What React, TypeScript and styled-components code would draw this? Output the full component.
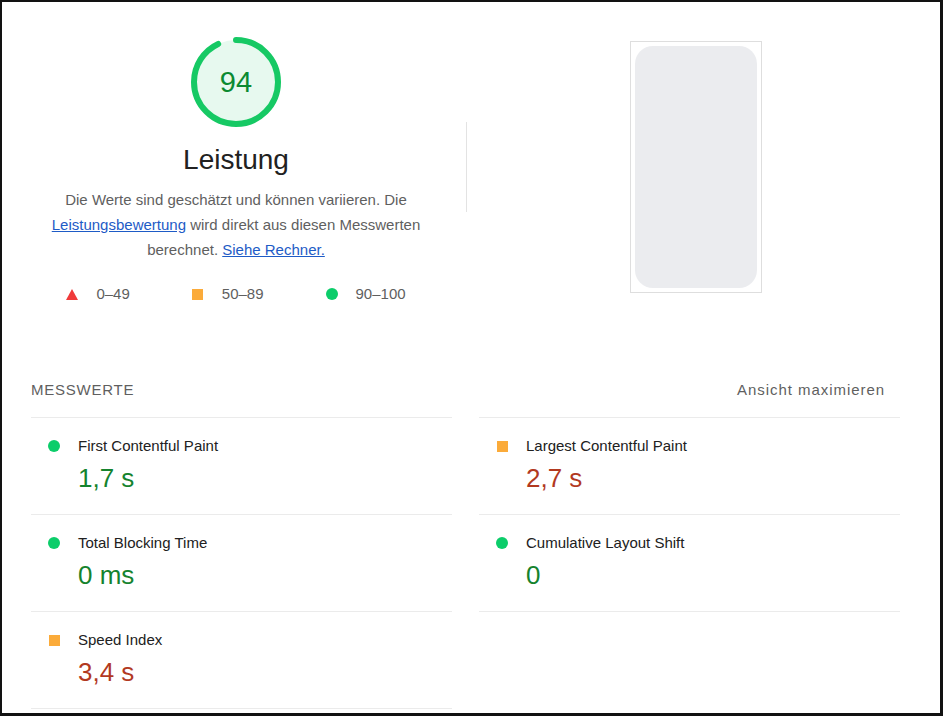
import styled, { createGlobalStyle } from 'styled-components';

const GlobalStyle = createGlobalStyle`
  html, body {
    margin: 0;
    padding: 0;
    background: #fff;
  }
  body {
    font-family: "Liberation Sans", Arial, sans-serif;
    color: #212121;
  }
`;

const Frame = styled.div`
  box-sizing: border-box;
  width: 943px;
  height: 716px;
  overflow: hidden;
  background: #fff;
  border-style: solid;
  border-color: #121212;
  border-width: 2px 3px 3px 2px;
  padding: 35px 40px 0 29px;
`;

const Summary = styled.section`
  display: flex;
  align-items: flex-start;
`;

const ScoreColumn = styled.div`
  width: 410px;
  display: flex;
  flex-direction: column;
  align-items: center;
`;

const GaugeWrap = styled.div`
  position: relative;
  width: 90px;
  height: 90px;

  svg {
    display: block;
    width: 90px;
    height: 90px;
  }
`;

const GaugeValue = styled.div`
  position: absolute;
  inset: 0;
  display: flex;
  align-items: center;
  justify-content: center;
  font-size: 29px;
  color: #0b8a31;
`;

const Title = styled.h2`
  margin: 16px 0 0;
  font-size: 28px;
  line-height: 34px;
  font-weight: 400;
  color: #212121;
`;

const Description = styled.p`
  margin: 10px 0 0;
  width: 390px;
  text-align: center;
  font-size: 15px;
  line-height: 25px;
  color: #5f5f5f;

  a {
    color: #1e5bc6;
    text-decoration: underline;
  }
`;

const Legend = styled.div`
  display: flex;
  gap: 62px;
  margin-top: 22px;
`;

const LegendItem = styled.div`
  display: flex;
  align-items: center;
  gap: 18px;
  font-size: 15px;
  line-height: 20px;
  color: #5f5f5f;
`;

type Kind = 'fail' | 'average' | 'pass';

const Icon = styled.span<{ $kind: Kind }>`
  display: inline-block;
  flex: none;
  box-sizing: border-box;
  ${({ $kind }) =>
    $kind === 'pass'
      ? `width: 12px; height: 12px; border-radius: 50%; background: #0ccd6a;`
      : $kind === 'average'
      ? `width: 11px; height: 11px; margin: 0 0.5px; background: #fbab3a;`
      : `width: 0; height: 0; border-left: 6px solid transparent; border-right: 6px solid transparent; border-bottom: 11px solid #f03b3b;`}
`;

const Divider = styled.div`
  width: 1px;
  height: 90px;
  margin: 85px 0 0 25px;
  background: #e3e3e3;
`;

const Screenshot = styled.div`
  box-sizing: border-box;
  width: 132px;
  height: 252px;
  margin: 4px 0 0 163px;
  padding: 4px;
  border: 1px solid #dedede;
  display: flex;
`;

const Phone = styled.div`
  flex: 1;
  border-radius: 18px;
  background: #ebecef;
`;

const MetricsHeader = styled.div`
  display: flex;
  justify-content: space-between;
  margin-top: 76px;
  padding-bottom: 17px;
  font-size: 15px;
  line-height: 20px;
  color: #5f5f5f;
`;

const SectionLabel = styled.span`
  letter-spacing: 0.75px;
`;

const ToggleLink = styled.span`
  padding-right: 15px;
  letter-spacing: 0.95px;
`;

const MetricGrid = styled.div`
  display: grid;
  grid-template-columns: 421px 421px;
  column-gap: 27px;
`;

const Metric = styled.div`
  display: grid;
  grid-template-columns: 12px 1fr;
  column-gap: 18px;
  padding: 18px 0 21px 17px;
  border-bottom: 1px solid #ebebeb;

  &:nth-child(-n + 2) {
    border-top: 1px solid #ebebeb;
  }
`;

const MetricIcon = styled.div`
  height: 20px;
  display: flex;
  align-items: center;
`;

const MetricLabel = styled.div`
  font-size: 15px;
  line-height: 20px;
  color: #212121;
`;

const MetricValue = styled.div<{ $kind: Kind }>`
  grid-column: 2;
  margin-top: 7px;
  font-size: 26px;
  line-height: 30px;
  color: ${({ $kind }) => ($kind === 'pass' ? '#15832e' : '#b2391f')};
`;

const metrics: { label: string; value: string; kind: Kind }[] = [
  { label: 'First Contentful Paint', value: '1,7 s', kind: 'pass' },
  { label: 'Largest Contentful Paint', value: '2,7 s', kind: 'average' },
  { label: 'Total Blocking Time', value: '0 ms', kind: 'pass' },
  { label: 'Cumulative Layout Shift', value: '0', kind: 'pass' },
  { label: 'Speed Index', value: '3,4 s', kind: 'average' },
];

const Gauge = ({ score }: { score: number }) => {
  const r = 56;
  const c = 2 * Math.PI * r;
  const dash = (score / 100) * c - 4;
  return (
    <GaugeWrap>
      <svg viewBox="0 0 120 120">
        <circle cx="60" cy="60" r={r} fill="#e7f9ef" />
        <circle
          cx="60"
          cy="60"
          r={r}
          fill="none"
          stroke="#16c964"
          strokeWidth="8"
          strokeLinecap="round"
          strokeDasharray={`${dash} ${c}`}
          transform="rotate(-90 60 60)"
        />
      </svg>
      <GaugeValue>{score}</GaugeValue>
    </GaugeWrap>
  );
};

export default function App() {
  return (
    <>
      <GlobalStyle />
      <Frame>
        <Summary>
          <ScoreColumn>
            <Gauge score={94} />
            <Title>Leistung</Title>
            <Description>
              Die Werte sind geschätzt und können variieren. Die{' '}
              <a href="#">Leistungsbewertung</a> wird direkt aus diesen Messwerten
              berechnet. <a href="#">Siehe Rechner.</a>
            </Description>
            <Legend>
              <LegendItem>
                <Icon $kind="fail" />
                0–49
              </LegendItem>
              <LegendItem>
                <Icon $kind="average" />
                50–89
              </LegendItem>
              <LegendItem>
                <Icon $kind="pass" />
                90–100
              </LegendItem>
            </Legend>
          </ScoreColumn>
          <Divider />
          <Screenshot>
            <Phone />
          </Screenshot>
        </Summary>

        <MetricsHeader>
          <SectionLabel>MESSWERTE</SectionLabel>
          <ToggleLink>Ansicht maximieren</ToggleLink>
        </MetricsHeader>

        <MetricGrid>
          {metrics.map((m) => (
            <Metric key={m.label}>
              <MetricIcon>
                <Icon $kind={m.kind} />
              </MetricIcon>
              <MetricLabel>{m.label}</MetricLabel>
              <MetricValue $kind={m.kind}>{m.value}</MetricValue>
            </Metric>
          ))}
        </MetricGrid>
      </Frame>
    </>
  );
}
